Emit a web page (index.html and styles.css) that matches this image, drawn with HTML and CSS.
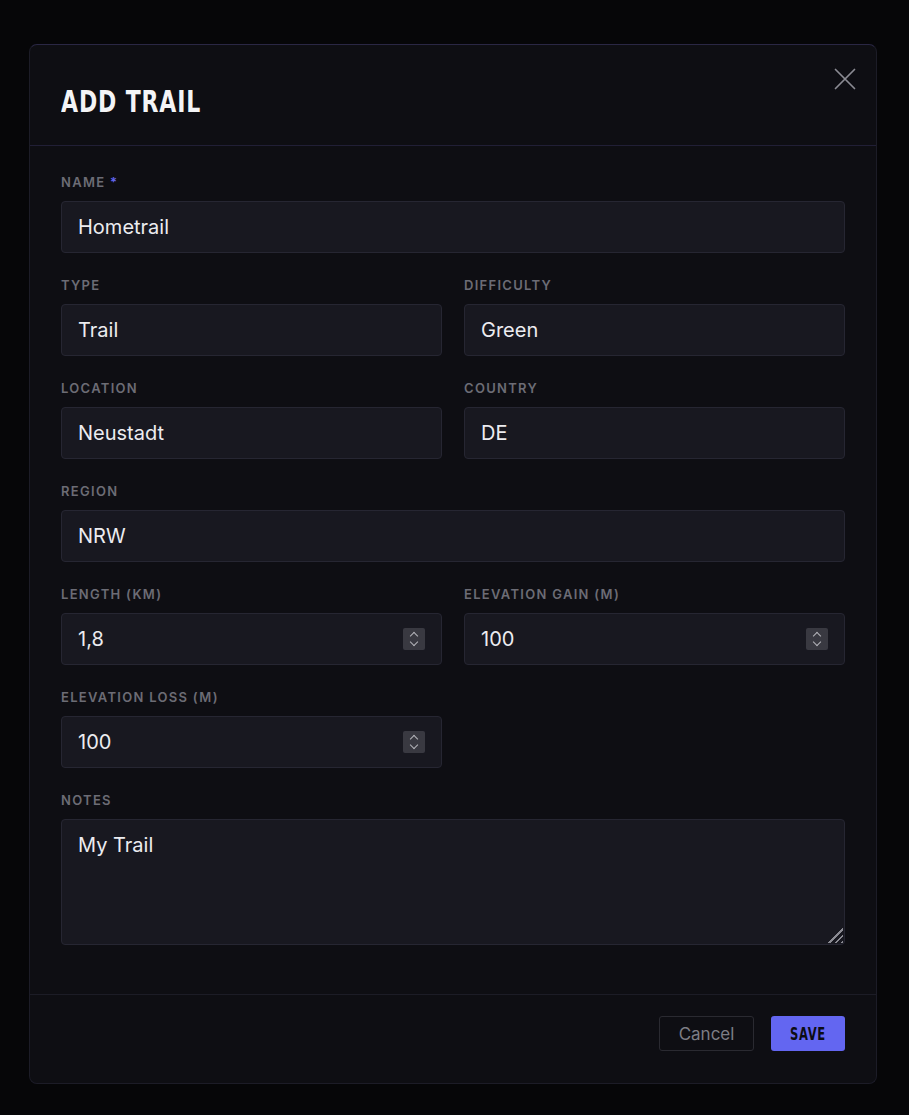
FILE: index.html
```html
<!DOCTYPE html>
<html lang="en">
<head>
    <meta charset="UTF-8">
    <meta name="viewport" content="width=device-width, initial-scale=1.0">
    <title>Add Trail</title>
    <link rel="stylesheet" href="styles.css">
</head>
<body>
    <div class="modal">
        <div class="modal-header">
            <h2 class="modal-title"><span>Add Trail</span></h2>
            <button class="close-btn" type="button" aria-label="Close">
                <svg width="22" height="22" viewBox="0 0 22 22" fill="none" stroke="currentColor" stroke-width="1.7" stroke-linecap="round">
                    <path d="M1.5 1.5 L20.5 20.5 M20.5 1.5 L1.5 20.5"/>
                </svg>
            </button>
        </div>
        <form class="modal-body">
            <div class="field">
                <label for="name">Name <span class="req">*</span></label>
                <input type="text" id="name" value="Hometrail">
            </div>
            <div class="row">
                <div class="field">
                    <label for="type">Type</label>
                    <input type="text" id="type" value="Trail">
                </div>
                <div class="field">
                    <label for="difficulty">Difficulty</label>
                    <input type="text" id="difficulty" value="Green">
                </div>
            </div>
            <div class="row">
                <div class="field">
                    <label for="location">Location</label>
                    <input type="text" id="location" value="Neustadt">
                </div>
                <div class="field">
                    <label for="country">Country</label>
                    <input type="text" id="country" value="DE">
                </div>
            </div>
            <div class="field">
                <label for="region">Region</label>
                <input type="text" id="region" value="NRW">
            </div>
            <div class="row">
                <div class="field">
                    <label for="length">Length (km)</label>
                    <input type="text" inputmode="decimal" id="length" value="1,8">
                    <span class="spin"></span>
                </div>
                <div class="field">
                    <label for="gain">Elevation gain (m)</label>
                    <input type="text" inputmode="numeric" id="gain" value="100">
                    <span class="spin"></span>
                </div>
            </div>
            <div class="row">
                <div class="field">
                    <label for="loss">Elevation loss (m)</label>
                    <input type="text" inputmode="numeric" id="loss" value="100">
                    <span class="spin"></span>
                </div>
            </div>
            <div class="field">
                <label for="notes">Notes</label>
                <textarea id="notes">My Trail</textarea>
                <span class="grip"></span>
            </div>
        </form>
        <div class="modal-footer">
            <button type="button" class="btn-cancel">Cancel</button>
            <button type="button" class="btn-save"><span>Save</span></button>
        </div>
    </div>
</body>
</html>
```

FILE: styles.css
```css
html {
    color-scheme: dark;
}

body {
    margin: 0;
    background-color: #060608;
    font-family: Inter, "Noto Sans", sans-serif;
    padding: 44px 0 31px 29px;
}

.modal {
    width: 848px;
    box-sizing: border-box;
    background-color: #0e0e13;
    border: 1px solid #1c1c27;
    border-top-color: #2a2744;
    border-radius: 8px;
}

.modal-header {
    display: flex;
    justify-content: space-between;
    align-items: flex-start;
    height: 101px;
    box-sizing: border-box;
    padding: 0 20px 0 31px;
    border-bottom: 1px solid #211f36;
}

.modal-title {
    margin: 39px 0 0;
    font-family: "DejaVu Sans", sans-serif;
    font-weight: bold;
    font-size: 31px;
    line-height: 34px;
    letter-spacing: 1.2px;
    text-transform: uppercase;
    color: #f4f4f6;
}

.modal-title span {
    display: inline-block;
    transform: scaleX(0.71);
    transform-origin: left center;
}

.close-btn {
    margin-top: 23px;
    width: 22px;
    height: 22px;
    padding: 0;
    border: none;
    background: none;
    color: #8b8b93;
    cursor: pointer;
}

.modal-body {
    padding: 28px 31px 25px;
}

.row {
    display: grid;
    grid-template-columns: 1fr 1fr;
    gap: 22px;
}

.field {
    position: relative;
    margin-bottom: 24px;
}

label {
    display: block;
    margin-bottom: 11px;
    font-size: 13px;
    line-height: 16px;
    font-weight: 600;
    letter-spacing: 1.3px;
    text-transform: uppercase;
    color: #6c6c75;
}

.req {
    color: #6366f1;
}

input,
textarea {
    display: block;
    width: 100%;
    box-sizing: border-box;
    height: 52px;
    padding: 0 16px;
    background-color: #181820;
    border: 1px solid #262632;
    border-radius: 4px;
    color: #ececf0;
    font-family: Inter, "Noto Sans", sans-serif;
    font-size: 20px;
    outline: none;
}

textarea {
    height: 126px;
    padding: 12px 16px;
    line-height: 26px;
    resize: none;
}

.spin {
    position: absolute;
    right: 17px;
    bottom: 15px;
    width: 22px;
    height: 22px;
    border-radius: 2px;
    background-color: #393941;
}

.spin::before,
.spin::after {
    content: "";
    position: absolute;
    left: 8px;
    width: 5px;
    height: 5px;
    border-left: 1.5px solid #b4b4ba;
    border-top: 1.5px solid #b4b4ba;
}

.spin::before {
    top: 5px;
    transform: rotate(45deg);
}

.spin::after {
    bottom: 5px;
    transform: rotate(225deg);
}

.grip {
    position: absolute;
    right: 2px;
    bottom: 2px;
    width: 16px;
    height: 16px;
    background: repeating-linear-gradient(135deg, transparent 0 3px, #8a8a92 3px 4.5px);
    clip-path: polygon(100% 0, 100% 100%, 0 100%);
}

.modal-footer {
    display: flex;
    justify-content: flex-end;
    gap: 17px;
    padding: 21px 31px 32px;
    border-top: 1px solid #1c1c26;
}

.btn-cancel {
    width: 95px;
    height: 35px;
    background: transparent;
    border: 1px solid #2a2a31;
    border-radius: 3px;
    color: #7d7d85;
    font-family: Inter, "Noto Sans", sans-serif;
    font-size: 17px;
    cursor: pointer;
}

.btn-save {
    width: 74px;
    height: 35px;
    padding: 0;
    background-color: #6366f1;
    border: none;
    border-radius: 3px;
    color: #0c0c14;
    font-family: "DejaVu Sans", sans-serif;
    font-weight: bold;
    font-size: 18px;
    letter-spacing: 1px;
    text-transform: uppercase;
    cursor: pointer;
}

.btn-save span {
    display: inline-block;
    transform: scaleX(0.64);
}
```
